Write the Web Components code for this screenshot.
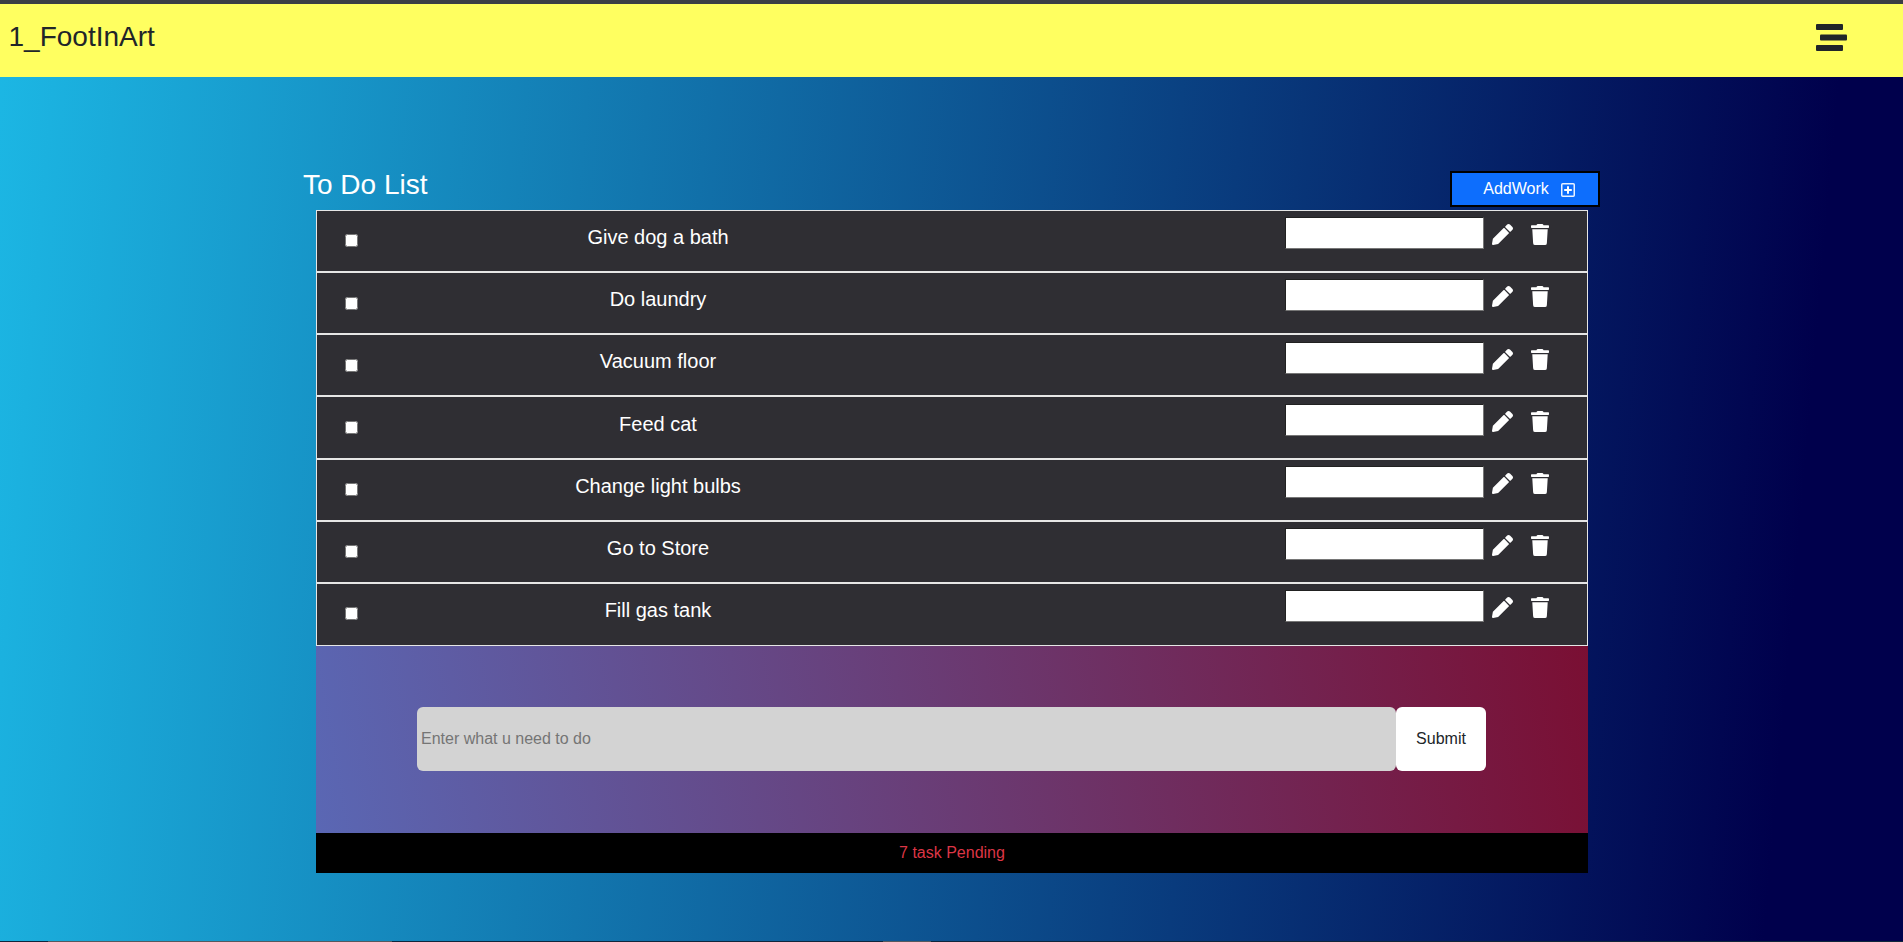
<!DOCTYPE html>
<html lang="en">
<head>
<meta charset="utf-8">
<title>To Do List</title>
<style>
html, body { margin: 0; height: 100%; }
body { font-family: "Liberation Sans", Arial, sans-serif; }
</style>
</head>
<body>
<todo-app>
  <todo-row>Give dog a bath</todo-row>
  <todo-row>Do laundry</todo-row>
  <todo-row>Vacuum floor</todo-row>
  <todo-row>Feed cat</todo-row>
  <todo-row>Change light bulbs</todo-row>
  <todo-row>Go to Store</todo-row>
  <todo-row>Fill gas tank</todo-row>
</todo-app>

<script>
class TopBar extends HTMLElement {
    constructor() {
        super();
        this.attachShadow({mode: 'open'});
        this.shadowRoot.innerHTML = `<style>
            :host { display: flex; align-items: flex-start; justify-content: space-between; height: 73px; padding-left: 8.5px; padding-right: 56px; background: #ffff60; color: #212529; border-top: 4px solid #3b3e44; }
            span { font-size: 28px; line-height: 32px; margin-top: 17px; }
            svg { display: block; width: 31px; height: 27px; margin-top: 20px; }
        </style>
        <span><slot></slot></span>
        <svg viewBox="0 0 31 27" fill="#212529">
            <rect x="0" y="0" width="27" height="6" rx="1"/>
            <rect x="4" y="10.5" width="27" height="6" rx="1"/>
            <rect x="0" y="21" width="27" height="6" rx="1"/>
        </svg>`;
    }
}

class AddButton extends HTMLElement {
    constructor() {
        super();
        this.attachShadow({mode: 'open'});
        this.shadowRoot.innerHTML = `<style>
            :host { display: flex; align-items: center; justify-content: center; gap: 12px; box-sizing: border-box; width: 150px; height: 36px; padding-left: 8px; background: #0d6efd; border: 2px solid #000; color: #fff; font-size: 16px; }
            svg { display: block; width: 14px; height: 14px; margin-top: 1px; }
        </style>
        <slot></slot>
        <svg viewBox="0 0 14 14" fill="none" stroke="#eaf2ff">
            <rect x="0.75" y="0.75" width="12.5" height="12.5" rx="1" stroke-width="1.5"/>
            <path d="M7 3.2v7.6M3.2 7h7.6" stroke="#fff" stroke-width="2"/>
        </svg>`;
    }
}

class TodoRow extends HTMLElement {
    constructor() {
        super();
        this.attachShadow({mode: 'open'});
        this.shadowRoot.innerHTML = `<style>
            :host { display: grid; grid-template-columns: 68px 546px 1fr auto; box-sizing: border-box; height: 62.14px; background: #2f2e33; border-bottom: 2px solid #e6e6e6; color: #fff; font-size: 20px; }
            .check { display: flex; justify-content: center; align-items: flex-start; padding-top: 23.45px; }
            input[type=checkbox] { width: 13px; height: 13px; margin: 0; }
            .name { text-align: center; padding-top: 15.2px; }
            .actions { grid-column: 4; display: flex; align-items: flex-start; padding: 6.3px 38px 0 0; }
            input[type=text] { box-sizing: border-box; width: 199px; height: 32px; margin: 0; border: 1px inset #767676; background: #fff; }
            .pen { display: block; width: 21px; height: 21px; margin: 7px 0 0 8px; }
            .bin { display: block; width: 18px; height: 21px; margin: 7px 0 0 18px; }
        </style>
        <div class="check"><input type="checkbox"></div>
        <div class="name"><slot></slot></div>
        <div class="actions">
            <input type="text">
            <svg class="pen" viewBox="0 0 512 512" fill="#fff"><path d="M497.9 142.1l-46.1 46.1c-4.7 4.7-12.3 4.7-17 0l-111-111c-4.7-4.7-4.7-12.3 0-17l46.1-46.1c18.7-18.7 49.1-18.7 67.9 0l60.1 60.1c18.8 18.7 18.8 49.1 0 67.9zM284.2 99.8L21.6 362.4.4 483.9c-2.9 16.4 11.4 30.6 27.8 27.8l121.5-21.3 262.6-262.6c4.7-4.7 4.7-12.3 0-17l-111-111c-4.8-4.7-12.4-4.7-17.1 0z"/></svg>
            <svg class="bin" viewBox="0 0 448 512" fill="#fff" preserveAspectRatio="none"><path d="M432 32H312l-9.4-18.7A24 24 0 0 0 281.1 0H166.8a23.72 23.72 0 0 0-21.4 13.3L136 32H16A16 16 0 0 0 0 48v32a16 16 0 0 0 16 16h416a16 16 0 0 0 16-16V48a16 16 0 0 0-16-16zM53.2 467a48 48 0 0 0 47.9 45h245.8a48 48 0 0 0 47.9-45L416 128H32z"/></svg>
        </div>`;
    }
}

class TodoForm extends HTMLElement {
    constructor() {
        super();
        this.attachShadow({mode: 'open'});
        this.shadowRoot.innerHTML = `<style>
            :host { display: flex; box-sizing: border-box; height: 187px; padding: 61px 102px 0 101px; background: linear-gradient(80deg, #5a67b4, #7a0f33); }
            input { flex: 1; box-sizing: border-box; height: 64px; margin: 0; padding: 0 4px; border: 0; border-radius: 6px; background: #d3d3d3; font: 16px "Liberation Sans", Arial, sans-serif; }
            button { box-sizing: border-box; width: 90px; height: 64px; border: 0; border-radius: 6px; background: #fff; color: #212529; font: 16px "Liberation Sans", Arial, sans-serif; }
        </style>
        <input type="text" placeholder="Enter what u need to do">
        <button>Submit</button>`;
    }
}

class TaskCount extends HTMLElement {
    constructor() {
        super();
        this.attachShadow({mode: 'open'});
        this.shadowRoot.innerHTML = `<style>
            :host { display: flex; align-items: center; justify-content: center; height: 40px; background: #000; color: #dc3545; font-size: 16px; }
        </style>
        <slot></slot>`;
    }
}

class BottomEdge extends HTMLElement {
    constructor() {
        super();
        this.attachShadow({mode: 'open'});
        this.shadowRoot.innerHTML = `<style>
            :host { display: flex; height: 1px; background: #10263c; }
            i { display: block; background: #55595e; }
            i:nth-of-type(1) { width: 344px; margin-left: 48px; }
            i:nth-of-type(2) { width: 48px; margin-left: 491px; }
        </style>
        <i></i><i></i>`;
    }
}

class TodoApp extends HTMLElement {
    constructor() {
        super();
        this.attachShadow({mode: 'open'});
        this.shadowRoot.innerHTML = `<style>
            :host { display: flex; flex-direction: column; box-sizing: border-box; height: 942px; background: linear-gradient(95deg, #1cb7e4 0%, #00004c 93%); overflow: hidden; }
            main { flex: 1; box-sizing: border-box; width: 1297px; margin: 0 auto; padding-top: 94px; }
            header { display: flex; justify-content: space-between; height: 39px; }
            h1 { margin: 0; font-size: 28px; font-weight: 400; color: #fff; line-height: 28px; }
            .board { margin: 0 12px 0 13px; }
            .list { border: 1px solid #e6e6e6; border-bottom: 0; }
            ::slotted(todo-row:last-child) { border-bottom-width: 1px; }
        </style>
        <top-bar>1_FootInArt</top-bar>
        <main>
            <header><h1>To Do List</h1><add-button>AddWork</add-button></header>
            <div class="board">
                <div class="list"><slot></slot></div>
                <todo-form></todo-form>
                <task-count>7 task Pending</task-count>
            </div>
        </main>
        <bottom-edge></bottom-edge>`;
    }
}

window.customElements.define('top-bar', TopBar);
window.customElements.define('add-button', AddButton);
window.customElements.define('todo-row', TodoRow);
window.customElements.define('todo-form', TodoForm);
window.customElements.define('task-count', TaskCount);
window.customElements.define('bottom-edge', BottomEdge);
window.customElements.define('todo-app', TodoApp);
</script>
</body>
</html>
